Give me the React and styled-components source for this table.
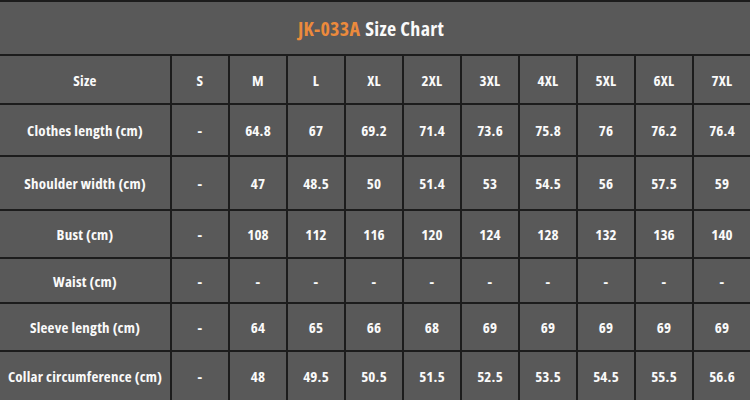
import React from "react";
import styled, { createGlobalStyle } from "styled-components";

const GlobalStyle = createGlobalStyle`
  html, body {
    margin: 0;
    padding: 0;
    background: #1c1c1c;
  }
  body {
    font-family: "Open Sans", "DejaVu Sans Condensed", sans-serif;
    font-stretch: 75%;
  }
`;

const Chart = styled.div`
  display: grid;
  grid-template-columns: 170px repeat(10, 56px);
  grid-template-rows: 52px 47px 50px 52px 46px 43px 46px 48px;
  gap: 2px;
  width: 750px;
  height: 400px;
  box-sizing: border-box;
  border-top: 2px solid #1c1c1c;
  background: #1c1c1c;
  overflow: hidden;
`;

const Title = styled.div`
  grid-column: 1 / -1;
  display: flex;
  align-items: center;
  justify-content: center;
  gap: 5px;
  background: #595959;
  color: #fafafa;
  font-size: 20px;
  letter-spacing: 0.3px;
  font-weight: bold;
  padding-right: 8px;
  padding-top: 1px;
`;

const Code = styled.span`
  color: #ec8a3c;
`;

const Cell = styled.div`
  display: flex;
  align-items: center;
  justify-content: center;
  background: #595959;
  color: #fafafa;
  font-size: 15px;
  letter-spacing: 0.2px;
  font-weight: bold;
  white-space: nowrap;
`;

const sizes = ["S", "M", "L", "XL", "2XL", "3XL", "4XL", "5XL", "6XL", "7XL"];

const rows = [
  ["Clothes length (cm)", "-", "64.8", "67", "69.2", "71.4", "73.6", "75.8", "76", "76.2", "76.4"],
  ["Shoulder width (cm)", "-", "47", "48.5", "50", "51.4", "53", "54.5", "56", "57.5", "59"],
  ["Bust (cm)", "-", "108", "112", "116", "120", "124", "128", "132", "136", "140"],
  ["Waist (cm)", "-", "-", "-", "-", "-", "-", "-", "-", "-", "-"],
  ["Sleeve length (cm)", "-", "64", "65", "66", "68", "69", "69", "69", "69", "69"],
  ["Collar circumference (cm)", "-", "48", "49.5", "50.5", "51.5", "52.5", "53.5", "54.5", "55.5", "56.6"],
];

export default function App() {
  return (
    <>
      <GlobalStyle />
      <Chart>
        <Title>
          <Code>JK-033A</Code> Size Chart
        </Title>
        <Cell>Size</Cell>
        {sizes.map((s) => (
          <Cell key={s}>{s}</Cell>
        ))}
        {rows.map((row) =>
          row.map((value, i) => <Cell key={row[0] + i}>{value}</Cell>)
        )}
      </Chart>
    </>
  );
}
